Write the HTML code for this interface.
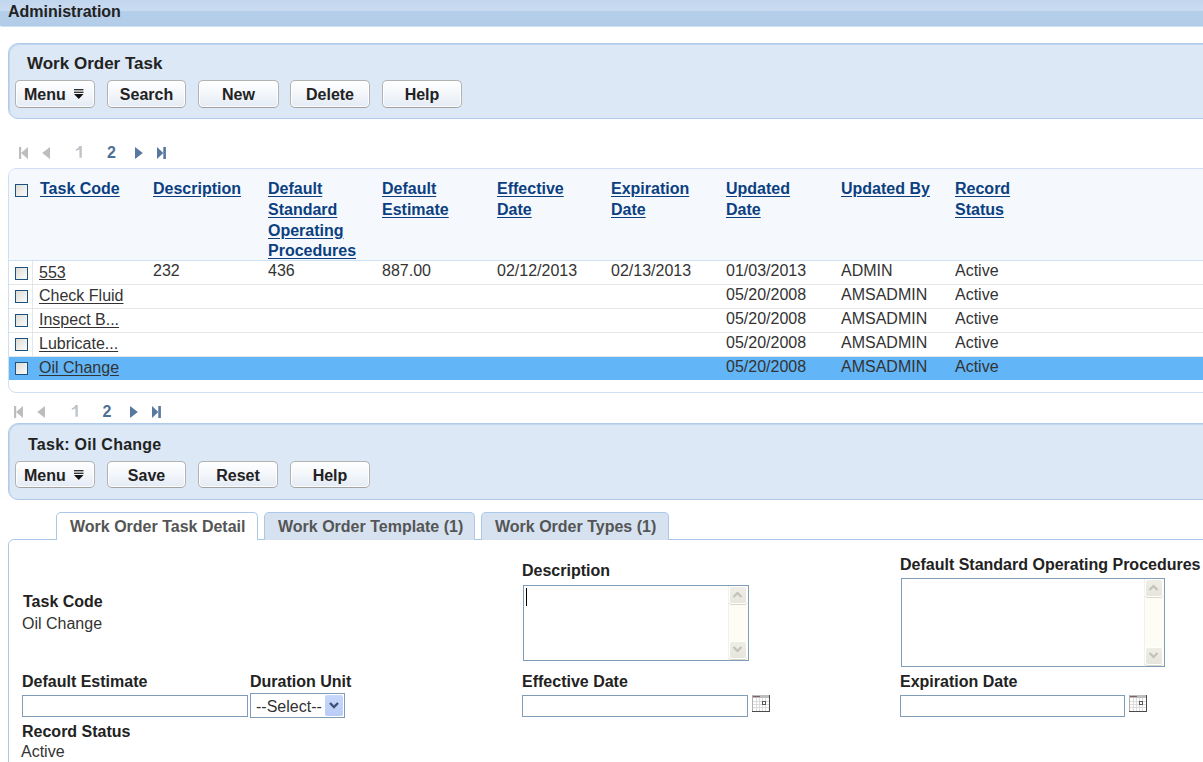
<!DOCTYPE html>
<html><head><meta charset="utf-8">
<style>
*{box-sizing:border-box;margin:0;padding:0}
html,body{width:1203px;height:762px;overflow:hidden;background:#fff}
body{position:relative;font-family:"Liberation Sans",sans-serif;font-size:16px;color:#333}
.a{position:absolute;white-space:nowrap;line-height:20px}
.b{font-weight:bold}
#hdr{position:absolute;left:0;top:0;width:1203px;height:27px;background:linear-gradient(#c1d5ed 0,#c9dcf2 11px,#b5cee9 11px,#b3cde9 25px,#aec9e7 26px,#d2e2f3 26px,#d2e2f3 27px);border-bottom-left-radius:2px}
.panel{position:absolute;left:8px;width:1210px;background:#dce8f5;border:1px solid #b0cbea;border-radius:10px;box-shadow:inset 1px 1px 0 #c2d7ef}
.btn{position:absolute;height:28px;border:1px solid #b2b2b2;border-bottom-color:#a2a2a2;border-radius:5px;background:linear-gradient(#ffffff,#f4f7fb 45%,#e4ebf4);box-shadow:inset 0 0 0 1px rgba(255,255,255,.9);font-weight:bold;color:#222;text-align:center;line-height:27px}
.ttl{color:#222;font-weight:bold}
.pg{position:absolute}
.cb{position:absolute;width:13px;height:13px;border:1px solid #1c5180;background:linear-gradient(135deg,#dcdcd7,#fbfbf9)}
.hl{color:#0c3f80;font-weight:bold;text-decoration:underline;text-underline-offset:2px}
.rl{text-decoration:underline;text-underline-offset:1.5px}
.ta{position:absolute;border:1px solid #7f9db9;background:#fff}
.sb{position:absolute;top:0;right:0;bottom:0;width:20px;background:#fdfdf6;border-left:1px solid #f3f2ea}
.sbb{position:absolute;left:0;width:18px;height:18px;border:1px solid #fff;border-radius:3px;background:linear-gradient(#eeeee7,#e7e6dd);box-shadow:0 1px 0 #d9d7c8}
.sbb svg{position:absolute;left:2px;top:3px}
.inp{position:absolute;border:1px solid #7f9db9;background:#fff;height:22px}
.tab{position:absolute;top:512px;height:28px;border:1px solid #abc8e8;border-bottom:none;border-radius:5px 5px 0 0;color:#555;font-weight:bold;line-height:28px;padding-left:13px}
</style></head><body>

<div id="hdr"></div>
<div class="a b" style="left:8px;top:2px;color:#222">Administration</div>

<!-- Panel 1 -->
<div class="panel" style="top:43px;height:76px"></div>
<div class="a ttl" style="left:27px;top:54px;font-size:17px">Work Order Task</div>
<div class="btn" style="left:15px;top:80px;width:80px;text-align:left;padding-left:8px">Menu</div>
<div class="btn" style="left:107px;top:80px;width:79px">Search</div>
<div class="btn" style="left:198px;top:80px;width:81px">New</div>
<div class="btn" style="left:290px;top:80px;width:80px">Delete</div>
<div class="btn" style="left:382px;top:80px;width:80px">Help</div>


<!-- menu icons -->
<svg class="pg" style="left:74px;top:89px" width="10" height="10" viewBox="0 0 10 10"><rect x="0" y="0" width="9.5" height="1" fill="#333"/><rect x="0" y="1" width="9.5" height="2" fill="#b0b0b0"/><rect x="0" y="3" width="9.5" height="1" fill="#333"/><path d="M0 5 H9.5 L4.75 10 Z" fill="#111"/></svg>

<!-- Pager 1 -->
<svg class="pg" style="left:18px;top:147px" width="150" height="12" viewBox="0 0 150 12">
 <rect x="1" y="0" width="2.2" height="12" fill="#bdbdbd"/><path d="M10 0 V12 L3 6 Z" fill="#bdbdbd"/>
 <path d="M32 0 V12 L24.2 6 Z" fill="#bdbdbd"/>
 <path d="M117 0 V12 L124.8 6 Z" fill="#5878a0"/>
 <path d="M139 0 V12 L145.3 6 Z" fill="#5878a0"/><rect x="145.3" y="0" width="2.6" height="12" fill="#5878a0"/>
</svg>
<svg style="position:absolute;left:75px;top:145px" width="9" height="14" viewBox="75 145 9 14"><path d="M79.4 146 H81.8 V157.7 H79.4 V149.6 L75.8 151.1 V149.4 Q78.4 148.2 79.4 146 Z" fill="#bfc3ca"/></svg>
<div class="a b" style="left:107px;top:143px;color:#4f7096">2</div>

<!-- Table -->
<div style="position:absolute;left:8px;top:168px;width:1220px;height:225px;border:1px solid #cfe0f2;border-radius:8px;background:#fff"></div>
<div style="position:absolute;left:9px;top:169px;width:1210px;height:92px;background:#f5f9fe;border-bottom:1px solid #cfe0f2;border-top-left-radius:7px"></div>
<div style="position:absolute;left:32px;top:261px;width:1px;height:119px;background:#dfe8f2"></div>
<div style="position:absolute;left:9px;top:284px;width:1200px;height:1px;background:#e6e6e6"></div>
<div style="position:absolute;left:9px;top:308px;width:1200px;height:1px;background:#e6e6e6"></div>
<div style="position:absolute;left:9px;top:332px;width:1200px;height:1px;background:#e6e6e6"></div>
<div style="position:absolute;left:9px;top:356px;width:1200px;height:1px;background:#e6e6e6"></div>
<div style="position:absolute;left:9px;top:357px;width:1200px;height:23px;background:#62b5f6"></div>

<div class="cb" style="left:15px;top:184px"></div>
<div class="a hl" style="left:40px;top:179.2px;line-height:20.67px">Task Code</div>
<div class="a hl" style="left:153px;top:179.2px;line-height:20.67px">Description</div>
<div class="a hl" style="left:268px;top:179.2px;line-height:20.67px">Default<br>Standard<br>Operating<br>Procedures</div>
<div class="a hl" style="left:382px;top:179.2px;line-height:20.67px">Default<br>Estimate</div>
<div class="a hl" style="left:497px;top:179.2px;line-height:20.67px">Effective<br>Date</div>
<div class="a hl" style="left:611px;top:179.2px;line-height:20.67px">Expiration<br>Date</div>
<div class="a hl" style="left:726px;top:179.2px;line-height:20.67px">Updated<br>Date</div>
<div class="a hl" style="left:841px;top:179.2px;line-height:20.67px">Updated By</div>
<div class="a hl" style="left:955px;top:179.2px;line-height:20.67px">Record<br>Status</div>
<div class="cb" style="left:15px;top:267px"></div>
<div class="a rl" style="left:39px;top:262.5px;text-underline-offset:0.6px">553</div>
<div class="a" style="left:153px;top:261px">232</div>
<div class="a" style="left:268px;top:261px">436</div>
<div class="a" style="left:382px;top:261px">887.00</div>
<div class="a" style="left:497px;top:261px">02/12/2013</div>
<div class="a" style="left:611px;top:261px">02/13/2013</div>
<div class="a" style="left:726px;top:261px">01/03/2013</div>
<div class="a" style="left:841px;top:261px">ADMIN</div>
<div class="a" style="left:955px;top:261px">Active</div>
<div class="cb" style="left:15px;top:290px"></div>
<div class="a rl" style="left:39px;top:285.5px">Check Fluid</div>
<div class="a" style="left:726px;top:285px">05/20/2008</div>
<div class="a" style="left:841px;top:285px">AMSADMIN</div>
<div class="a" style="left:955px;top:285px">Active</div>
<div class="cb" style="left:15px;top:314px"></div>
<div class="a rl" style="left:39px;top:309.5px">Inspect B...</div>
<div class="a" style="left:726px;top:309px">05/20/2008</div>
<div class="a" style="left:841px;top:309px">AMSADMIN</div>
<div class="a" style="left:955px;top:309px">Active</div>
<div class="cb" style="left:15px;top:338px"></div>
<div class="a rl" style="left:39px;top:333.5px">Lubricate...</div>
<div class="a" style="left:726px;top:333px">05/20/2008</div>
<div class="a" style="left:841px;top:333px">AMSADMIN</div>
<div class="a" style="left:955px;top:333px">Active</div>
<div class="cb" style="left:15px;top:362px"></div>
<div class="a rl" style="left:39px;top:357.5px">Oil Change</div>
<div class="a" style="left:726px;top:357px">05/20/2008</div>
<div class="a" style="left:841px;top:357px">AMSADMIN</div>
<div class="a" style="left:955px;top:357px">Active</div>


<!-- Pager 2 -->
<svg class="pg" style="left:13px;top:406px" width="150" height="12" viewBox="0 0 150 12">
 <rect x="1" y="0" width="2.2" height="12" fill="#bdbdbd"/><path d="M10 0 V12 L3 6 Z" fill="#bdbdbd"/>
 <path d="M32 0 V12 L24.2 6 Z" fill="#bdbdbd"/>
 <path d="M117 0 V12 L124.8 6 Z" fill="#5878a0"/>
 <path d="M139 0 V12 L145.3 6 Z" fill="#5878a0"/><rect x="145.3" y="0" width="2.6" height="12" fill="#5878a0"/>
</svg>
<svg style="position:absolute;left:71px;top:404px" width="9" height="14" viewBox="75 145 9 14"><path d="M79.4 146 H81.8 V157.7 H79.4 V149.6 L75.8 151.1 V149.4 Q78.4 148.2 79.4 146 Z" fill="#bfc3ca"/></svg>
<div class="a b" style="left:102.5px;top:402px;color:#4f7096">2</div>

<!-- Panel 2 -->
<div class="panel" style="top:423px;height:77px"></div>
<div class="a ttl" style="left:28px;top:435px;letter-spacing:0.25px">Task: Oil Change</div>
<div class="btn" style="left:15px;top:461px;width:80px;height:27px;line-height:28px;text-align:left;padding-left:8px">Menu</div>
<svg class="pg" style="left:74px;top:470px" width="10" height="10" viewBox="0 0 10 10"><rect x="0" y="0" width="9.5" height="1" fill="#333"/><rect x="0" y="1" width="9.5" height="2" fill="#b0b0b0"/><rect x="0" y="3" width="9.5" height="1" fill="#333"/><path d="M0 5 H9.5 L4.75 10 Z" fill="#111"/></svg>
<div class="btn" style="left:107px;top:461px;width:79px;height:27px;line-height:28px">Save</div>
<div class="btn" style="left:198px;top:461px;width:80px;height:27px;line-height:28px">Reset</div>
<div class="btn" style="left:290px;top:461px;width:80px;height:27px;line-height:28px">Help</div>

<!-- Tabs -->
<div style="position:absolute;left:8px;top:539px;width:1220px;height:240px;border:1px solid #abc8e8;border-radius:6px;background:#fff"></div>
<div class="tab" style="left:56px;width:202px;background:#fff;height:28px">Work Order Task Detail</div>
<div style="position:absolute;left:57px;top:539px;width:200px;height:1px;background:#fff"></div>
<div class="tab" style="left:264px;width:211px;background:#d6e2f0">Work Order Template (1)</div>
<div class="tab" style="left:481px;width:188px;background:#d6e2f0">Work Order Types (1)</div>

<!-- Form -->
<div class="a b" style="left:23px;top:592px;color:#222">Task Code</div>
<div class="a" style="left:22px;top:614px">Oil Change</div>
<div class="a b" style="left:522px;top:561px;color:#222">Description</div>
<div class="ta" style="left:523px;top:585px;width:226px;height:76px"><div class="sb"><div class="sbb" style="top:0"><svg width="11" height="9" viewBox="0 0 11 9"><path d="M1.5 7 L5.5 3 L9.5 7" fill="none" stroke="#c3c2b6" stroke-width="2.2"/></svg></div><div class="sbb" style="bottom:1px"><svg width="11" height="9" viewBox="0 0 11 9"><path d="M1.5 2 L5.5 6 L9.5 2" fill="none" stroke="#c3c2b6" stroke-width="2.2"/></svg></div></div></div>
<div style="position:absolute;left:526px;top:588px;width:1px;height:18px;background:#000"></div>
<div class="a b" style="left:900px;top:555px;color:#222">Default Standard Operating Procedures</div>
<div class="ta" style="left:901px;top:578px;width:264px;height:89px"><div class="sb"><div class="sbb" style="top:0"><svg width="11" height="9" viewBox="0 0 11 9"><path d="M1.5 7 L5.5 3 L9.5 7" fill="none" stroke="#c3c2b6" stroke-width="2.2"/></svg></div><div class="sbb" style="bottom:1px"><svg width="11" height="9" viewBox="0 0 11 9"><path d="M1.5 2 L5.5 6 L9.5 2" fill="none" stroke="#c3c2b6" stroke-width="2.2"/></svg></div></div></div>

<div class="a b" style="left:22px;top:672px;color:#222">Default Estimate</div>
<div class="inp" style="left:22px;top:695px;width:226px"></div>
<div class="a b" style="left:250px;top:672px;color:#222">Duration Unit</div>
<div style="position:absolute;left:250px;top:693px;width:95px;height:25px;border:1px solid #7f9db9;background:#fff"><div style="position:absolute;left:74px;top:1px;width:18px;height:21px;border-radius:2px;background:linear-gradient(#c8d8fc,#b8ccf6)"><svg style="position:absolute;left:4px;top:7px" width="10" height="7" viewBox="0 0 10 7"><path d="M1 1 L5 5 L9 1" fill="none" stroke="#3f5275" stroke-width="2.4"/></svg></div></div>
<div class="a" style="left:256px;top:696.5px">--Select--</div>
<div class="a b" style="left:522px;top:672px;color:#222">Effective Date</div>
<div class="inp" style="left:522px;top:695px;width:226px"></div>
<svg style="position:absolute;left:752px;top:695px" width="18" height="17" viewBox="0 0 18 17" shape-rendering="crispEdges"><rect width="18" height="17" fill="#dcdcdc"/><rect x="0" y="0" width="18" height="3" fill="#bdbdbd"/><rect x="1" y="1" width="7" height="1" fill="#7d6262"/><rect x="1" y="3" width="3" height="3" fill="#fff"/><rect x="1" y="7" width="3" height="2" fill="#fff"/><rect x="1" y="10" width="3" height="2" fill="#fff"/><rect x="1" y="13" width="3" height="3" fill="#fff"/><rect x="5" y="3" width="2" height="3" fill="#fff"/><rect x="5" y="7" width="2" height="2" fill="#fff"/><rect x="5" y="10" width="2" height="2" fill="#fff"/><rect x="5" y="13" width="2" height="3" fill="#fff"/><rect x="8" y="3" width="2" height="3" fill="#fff"/><rect x="8" y="7" width="2" height="2" fill="#fff"/><rect x="8" y="10" width="2" height="2" fill="#fff"/><rect x="8" y="13" width="2" height="3" fill="#fff"/><rect x="11" y="3" width="2" height="3" fill="#fff"/><rect x="11" y="7" width="2" height="2" fill="#fff"/><rect x="11" y="10" width="2" height="2" fill="#fff"/><rect x="11" y="13" width="2" height="3" fill="#fff"/><rect x="14" y="3" width="3" height="3" fill="#fff"/><rect x="14" y="7" width="3" height="2" fill="#fff"/><rect x="14" y="10" width="3" height="2" fill="#fff"/><rect x="14" y="13" width="3" height="3" fill="#fff"/><rect x="10.5" y="6.5" width="3" height="3" fill="#fff" stroke="#5a5a5a" stroke-width="1"/><rect x="17" y="0" width="1" height="17" fill="#4a4a4a"/><rect x="0" y="16" width="18" height="1" fill="#4a4a4a"/><rect x="0" y="0" width="1" height="16" fill="#b0b0b0"/></svg>
<div class="a b" style="left:900px;top:672px;color:#222">Expiration Date</div>
<div class="inp" style="left:900px;top:695px;width:225px"></div>
<svg style="position:absolute;left:1129px;top:695px" width="18" height="17" viewBox="0 0 18 17" shape-rendering="crispEdges"><rect width="18" height="17" fill="#dcdcdc"/><rect x="0" y="0" width="18" height="3" fill="#bdbdbd"/><rect x="1" y="1" width="7" height="1" fill="#7d6262"/><rect x="1" y="3" width="3" height="3" fill="#fff"/><rect x="1" y="7" width="3" height="2" fill="#fff"/><rect x="1" y="10" width="3" height="2" fill="#fff"/><rect x="1" y="13" width="3" height="3" fill="#fff"/><rect x="5" y="3" width="2" height="3" fill="#fff"/><rect x="5" y="7" width="2" height="2" fill="#fff"/><rect x="5" y="10" width="2" height="2" fill="#fff"/><rect x="5" y="13" width="2" height="3" fill="#fff"/><rect x="8" y="3" width="2" height="3" fill="#fff"/><rect x="8" y="7" width="2" height="2" fill="#fff"/><rect x="8" y="10" width="2" height="2" fill="#fff"/><rect x="8" y="13" width="2" height="3" fill="#fff"/><rect x="11" y="3" width="2" height="3" fill="#fff"/><rect x="11" y="7" width="2" height="2" fill="#fff"/><rect x="11" y="10" width="2" height="2" fill="#fff"/><rect x="11" y="13" width="2" height="3" fill="#fff"/><rect x="14" y="3" width="3" height="3" fill="#fff"/><rect x="14" y="7" width="3" height="2" fill="#fff"/><rect x="14" y="10" width="3" height="2" fill="#fff"/><rect x="14" y="13" width="3" height="3" fill="#fff"/><rect x="10.5" y="6.5" width="3" height="3" fill="#fff" stroke="#5a5a5a" stroke-width="1"/><rect x="17" y="0" width="1" height="17" fill="#4a4a4a"/><rect x="0" y="16" width="18" height="1" fill="#4a4a4a"/><rect x="0" y="0" width="1" height="16" fill="#b0b0b0"/></svg>
<div class="a b" style="left:22px;top:722px;color:#222">Record Status</div>
<div class="a" style="left:21px;top:742px">Active</div>

</body></html>
